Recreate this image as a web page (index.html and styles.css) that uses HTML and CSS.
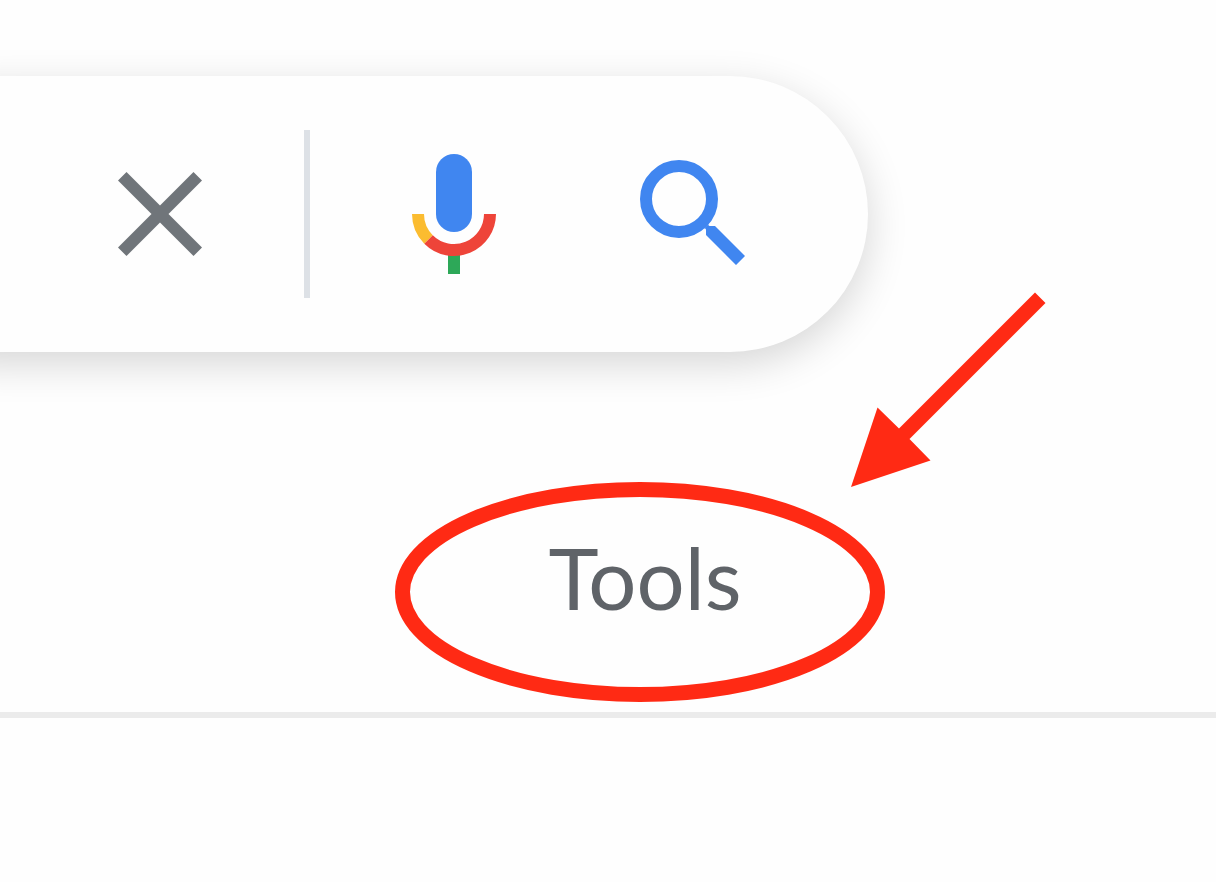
FILE: index.html
```html
<!DOCTYPE html>
<html lang="en">
<head>
<meta charset="utf-8">
<title>Search tools</title>
<link rel="stylesheet" href="styles.css">
</head>
<body>
<form class="search-bar" role="search">
  <input class="query" type="text" aria-label="Search">
  <button class="icon-button clear" type="reset" aria-label="Clear">
    <svg width="84" height="84" viewBox="0 0 84 84"><path fill="#70757a" d="M8.500 0 42 33.500 75.500 0 84 8.500 50.500 42 84 75.500 75.500 84 42 50.500 8.500 84 0 75.500 33.500 42 0 8.500z"/></svg>
  </button>
  <span class="divider"></span>
  <button class="icon-button voice" type="button" aria-label="Search by voice">
    <svg width="84" height="120" viewBox="0 0 84 120">
      <rect x="24" width="36" height="78" rx="18" fill="#4086f0"/>
      <path fill="#2da858" d="M36 100h12v20H36z"/>
      <path fill="none" stroke="#fbbc30" stroke-width="12" d="M6 60a36 36 0 0 0 10.540 25.460"/>
      <path fill="none" stroke="#ee4439" stroke-width="12" d="M16.540 85.460A36 36 0 0 0 78 60"/>
    </svg>
  </button>
  <button class="icon-button submit" type="submit" aria-label="Search">
    <svg width="105" height="105" viewBox="0 0 105 105">
      <circle cx="39" cy="39" r="33" fill="none" stroke="#4086f0" stroke-width="12"/>
      <path fill="#4086f0" d="M69 63.500 68.200 65 69.500 66H75l30 30-9 9-30-30v-5.500L65 68.200 63.500 69z"/>
    </svg>
  </button>
</form>
<nav class="toolbar">
  <button class="tools" type="button">Tools
    <svg class="ring" viewBox="0 0 490 220" aria-hidden="true"><ellipse cx="245" cy="110" rx="237.500" ry="102.500"/></svg>
    <svg class="arrow" viewBox="0 0 195 195" aria-hidden="true"><path d="M0 195 26.500 115.500 48 136.500 184 .500 194.500 11 58.500 147 79.500 168.500z"/></svg>
  </button>
</nav>
</body>
</html>
```
FILE: styles.css
```css
* {
  box-sizing: border-box;
}

body {
  margin: 0;
  padding-top: 76px;
  overflow-x: hidden;
  background: #fefefe;
  font-family: Lato, "Open Sans", sans-serif;
}

button,
input {
  border: 0;
  padding: 0;
  background: none;
  font: inherit;
}

.search-bar {
  display: flex;
  align-items: center;
  height: 276px;
  margin-left: -140px;
  margin-right: 348px;
  padding-right: 123px;
  border-radius: 138px;
  background: #fefefe;
  box-shadow: 0 12px 40px rgba(0, 0, 0, 0.16);
}

.query {
  flex: 1;
  min-width: 0;
  font-size: 84px;
  outline: 0;
}

.icon-button {
  flex: none;
  cursor: pointer;
}

.icon-button svg {
  display: block;
}

.divider {
  width: 6px;
  height: 168px;
  margin: 0 102px;
  background: #dde1e6;
}

.submit {
  margin-left: 144px;
  padding-bottom: 4px;
}

.toolbar {
  display: flex;
  justify-content: flex-end;
  padding: 130px 331px 10px 0;
  border-bottom: 6px solid #ebebeb;
}

.tools {
  position: relative;
  width: 490px;
  height: 220px;
  padding: 0 0 30px 10px;
  color: #5f6368;
  font-size: 85px;
  line-height: 100px;
  cursor: pointer;
}

.ring,
.arrow {
  position: absolute;
  pointer-events: none;
}

.ring {
  inset: 0;
  width: 100%;
  height: 100%;
  fill: none;
  stroke: #ff2a14;
  stroke-width: 15px;
}

.arrow {
  left: 456px;
  top: -190px;
  width: 195px;
  height: 195px;
  fill: #ff2a14;
}
```
